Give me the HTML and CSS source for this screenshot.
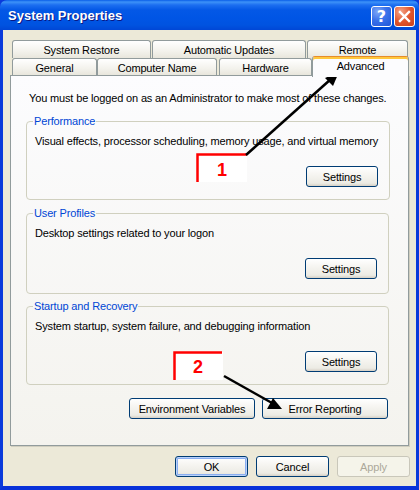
FILE: index.html
```html
<!DOCTYPE html>
<html>
<head>
<meta charset="utf-8">
<link rel="stylesheet" href="styles.css">
</head>
<body>
<div class="window">
  <div class="titlebar">
    <span class="title">System Properties</span>
    <div class="tb-btns">
      <div class="tb-btn help">?</div>
      <div class="tb-btn close">
        <svg width="13" height="13" viewBox="0 0 13 13"><path d="M2 2 L11 11 M11 2 L2 11" stroke="#fff" stroke-width="2.4" stroke-linecap="square"/></svg>
      </div>
    </div>
  </div>
  <div class="body">
    <div class="tabrow back">
      <div class="tab w-sr">System Restore</div>
      <div class="tab w-au">Automatic Updates</div>
      <div class="tab w-re">Remote</div>
    </div>
    <div class="tabrow front">
      <div class="tab w-ge">General</div>
      <div class="tab w-cn">Computer Name</div>
      <div class="tab w-hw">Hardware</div>
      <div class="tab w-ad selected">Advanced</div>
    </div>
    <div class="panel">
      <p class="intro">You must be logged on as an Administrator to make most of these changes.</p>
      <fieldset class="group g1">
        <legend>Performance</legend>
        <p class="desc">Visual effects, processor scheduling, memory usage, and virtual memory</p>
        <div class="group-actions"><button class="btn">Settings</button></div>
      </fieldset>
      <fieldset class="group g2">
        <legend>User Profiles</legend>
        <p class="desc">Desktop settings related to your logon</p>
        <div class="group-actions"><button class="btn">Settings</button></div>
      </fieldset>
      <fieldset class="group g3">
        <legend>Startup and Recovery</legend>
        <p class="desc">System startup, system failure, and debugging information</p>
        <div class="group-actions"><button class="btn">Settings</button></div>
      </fieldset>
      <div class="panel-actions">
        <button class="btn wide">Environment Variables</button>
        <button class="btn wide">Error Reporting</button>
      </div>
    </div>
    <div class="dlg-actions">
      <button class="btn dlg default">OK</button>
      <button class="btn dlg">Cancel</button>
      <button class="btn dlg disabled">Apply</button>
    </div>
  </div>
  <svg class="annot" width="419" height="490" viewBox="0 0 419 490">
    <rect x="197" y="154" width="50" height="28" fill="#fff"/>
    <path d="M197.5 182 V154.5 H247" fill="none" stroke="#f00" stroke-width="2.5"/>
    <text x="222" y="176" class="num">1</text>
    <line x1="246" y1="155" x2="331" y2="79" stroke="#000" stroke-width="2.5"/>
    <polygon points="339,72 325,78 333,86" fill="#000"/>
    <rect x="174" y="352" width="49" height="28" fill="#fff"/>
    <path d="M174.5 380 V352.5 H222" fill="none" stroke="#f00" stroke-width="2.5"/>
    <text x="198" y="373" class="num">2</text>
    <line x1="224" y1="376" x2="272" y2="403" stroke="#000" stroke-width="2.5"/>
    <polygon points="282,409 267,409 273,398" fill="#000"/>
  </svg>
</div>
</body>
</html>
```
FILE: styles.css
```css
html, body {
  margin: 0;
  padding: 0;
  background: #fff;
}
.window {
  position: relative;
  width: 419px;
  height: 490px;
  box-sizing: border-box;
  background: #0831D9;
  border-left: 3px solid #0A3ADB;
  border-right: 3px solid #0A3ADB;
  border-bottom: 4px solid #0831D9;
  box-shadow: inset 0 -1px #001EA0;
  font-family: "Liberation Sans", Arial, sans-serif;
  font-size: 11px;
  letter-spacing: -0.15px;
  color: #000;
  display: flex;
  flex-direction: column;
}
.titlebar {
  height: 30px;
  margin: 0 -3px;
  padding: 0 3px 0 8px;
  border-radius: 7px 7px 0 0;
  background: linear-gradient(#0A5EE8 0, #3D92F8 2px, #1C6EF0 5px, #0458E6 10px, #0055E5 18px, #0053E0 25px, #0047D6 30px);
  display: flex;
  align-items: center;
  justify-content: space-between;
}
.title {
  color: #fff;
  font-weight: bold;
  font-size: 13px;
  font-family: "Liberation Sans", Arial, sans-serif;
  letter-spacing: 0;
  text-shadow: 1px 1px #0A1883;
  margin-top: 1px;
}
.tb-btns {
  display: flex;
  gap: 2px;
  margin-right: 1px;
  margin-top: 3px;
}
.tb-btn {
  width: 21px;
  height: 21px;
  box-sizing: border-box;
  border: 1px solid #fff;
  border-radius: 3px;
  display: flex;
  align-items: center;
  justify-content: center;
  color: #fff;
  letter-spacing: 0;
}
.help {
  background: radial-gradient(circle at 30% 25%, #7EA8F8 0, #3A72EA 45%, #1F55D8 100%);
  font-weight: bold;
  font-size: 16px;
  font-family: "DejaVu Sans", sans-serif;
}
.close {
  background: radial-gradient(circle at 30% 25%, #F4A488 0, #E1562D 50%, #C9401C 100%);
}
.body {
  flex: 1;
  background: #ECE9D8;
  display: flex;
  flex-direction: column;
}
.tabrow {
  display: flex;
  padding-left: 9px;
}
.tabrow.back {
  margin-top: 10px;
  height: 18px;
}
.tabrow.front {
  height: 17px;
}
.tab {
  box-sizing: border-box;
  border: 1px solid #919B9C;
  border-bottom: none;
  border-radius: 3px 3px 0 0;
  background: linear-gradient(#FFFFFF, #F3F2EC 60%, #E8E6DC);
  display: flex;
  align-items: center;
  justify-content: center;
  padding-top: 1px;
}
.back .tab { height: 18px; }
.front .tab { height: 17px; }
.w-sr { width: 139px; margin-right: 1px; }
.w-au { width: 154px; margin-right: 1px; }
.w-re { width: 101px; }
.w-ge { width: 85px; }
.w-cn { width: 120px; margin-right: 2px; }
.w-hw { width: 93px; }
.front .tab.selected {
  width: 97px;
  height: 21px;
  margin-top: -2px;
  position: relative;
  z-index: 2;
  background: #FCFCFE;
  border-top: 1px solid #E68B2C;
  box-shadow: inset 0 2px #FFC83C;
  align-items: flex-start;
  padding-top: 3px;
}
.panel {
  margin-left: 7px;
  width: 399px;
  height: 371px;
  box-sizing: border-box;
  border: 1px solid #919B9C;
  box-shadow: 1px 1px #D0CEBF;
  background: linear-gradient(#FCFCFE, #F4F3EE);
  padding: 0 19px 0 15px;
}
.intro {
  margin: 16px 0 0 3px;
  line-height: 13px;
  white-space: nowrap;
}
.group {
  margin: 0;
  padding: 0 11px 0 8px;
  border: 1px solid #D0D0BF;
  border-radius: 4px;
  box-sizing: border-box;
  display: flex;
  flex-direction: column;
}
.group legend {
  color: #0046D5;
  padding: 0 1px;
  margin-left: -2px;
  line-height: 13px;
}
.g1 { margin-top: 10px; height: 85px; }
.g2 { margin-top: 7px; height: 87px; }
.g3 { margin-top: 6px; height: 85px; }
.desc {
  margin: 7px 0 0 0;
  line-height: 13px;
  white-space: nowrap;
}
.group-actions {
  display: flex;
  justify-content: flex-end;
  margin-top: 18px;
}
.btn {
  font-family: inherit;
  font-size: 11px;
  letter-spacing: -0.15px;
  color: #000;
  height: 21px;
  width: 72px;
  box-sizing: border-box;
  border: 1px solid #003C74;
  border-radius: 3px;
  background: linear-gradient(#FFFFFF, #F6F5F1 40%, #ECEBE4 85%, #D6D0C5);
  padding: 0;
  margin: 0;
}
.panel-actions {
  display: flex;
  justify-content: flex-end;
  gap: 7px;
  margin: 13px 1px 0 0;
}
.btn.wide { width: 126px; }
.dlg-actions {
  display: flex;
  justify-content: flex-end;
  gap: 8px;
  margin: 10px 6px 0 0;
}
.btn.dlg { width: 73px; }
.btn.default {
  box-shadow: inset 0 0 0 1px #B9D1FA, inset 0 0 0 2px #8AAEF0;
}
.btn.disabled {
  color: #ACA899;
  border-color: #C9C7BA;
  background: #F5F4EA;
}
.annot {
  position: absolute;
  left: -3px;
  top: 0;
  pointer-events: none;
}
.num {
  fill: #f00;
  font-family: "Liberation Sans", Arial, sans-serif;
  font-weight: bold;
  font-size: 18px;
  text-anchor: middle;
  letter-spacing: 0;
}
```
